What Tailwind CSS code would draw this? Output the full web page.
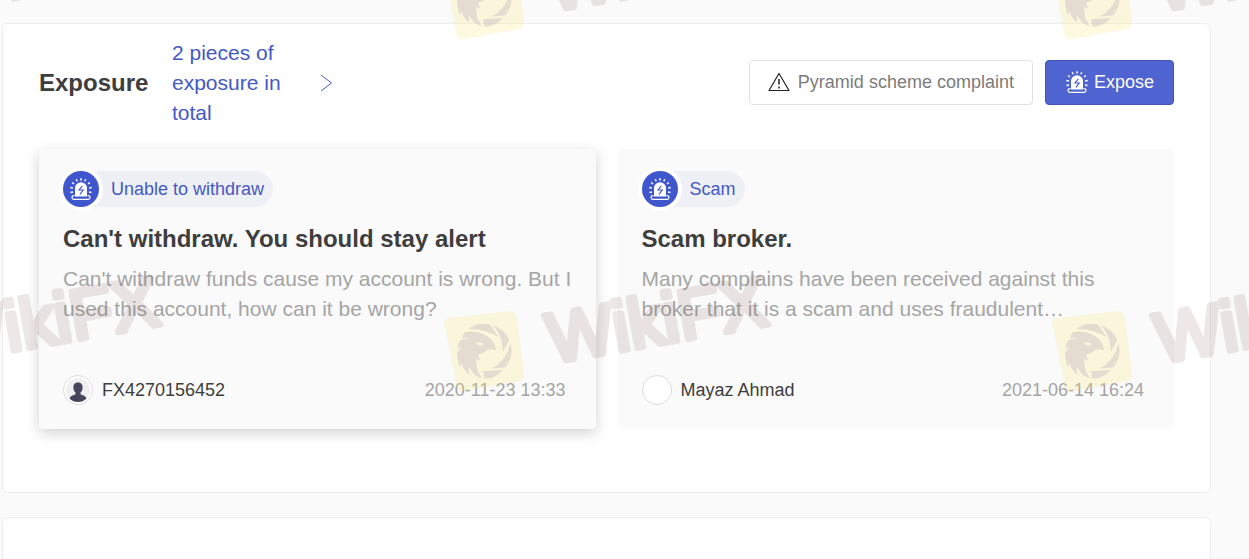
<!DOCTYPE html>
<html lang="en">
<head>
    <meta charset="UTF-8">
    <meta name="viewport" content="width=device-width, initial-scale=1.0">
    <title>WikiFX - Exposure</title>
    <script src="https://cdn.jsdelivr.net/npm/@tailwindcss/browser@4"></script>
</head>
<body class="bg-[#fafafa] font-['Liberation_Sans',Arial,sans-serif] text-[#3e3e3e]">
    <!-- shared icons -->
    <svg class="hidden">
        <symbol id="siren" viewBox="0 0 24 24">
            <path d="M6 19.500V11a6 5.800 0 0 1 12 0v8.500z" fill="currentColor"/>
            <path d="M5.500 18.600h-.6a1.900 1.900 0 0 0 0 3.800h14.200a1.900 1.900 0 0 0 0-3.800h-.6" fill="none" stroke="currentColor" stroke-width="1.200"/>
            <path d="M12 3.500V1.300M8.200 4.200l-.9-2M15.800 4.200l.9-2M4.900 6.900 3.200 5.500M19.100 6.900l1.700-1.400M3.900 11l-2.600-.5M20.100 11l2.600-.5M4 15l-2.500.5M20 15l2.500.5" fill="none" stroke="currentColor" stroke-width="1.500"/>
            <path d="M13.400 8.800 10 13h4.200l-3.300 4.400" fill="none" stroke="#4056cc" stroke-width="1.100"/>
        </symbol>
    </svg>

    <main class="flex flex-col gap-6 pt-[23px] pl-[2px] pr-[38px]">
        <section class="bg-white border border-[#eeeeee] rounded-md px-9 pt-[14px] pb-[63px]">
            <div class="flex items-center justify-between">
                <div class="flex items-center">
                    <h2 class="text-2xl font-bold w-[133px]">Exposure</h2>
                    <a href="#" class="flex items-center text-[#4459c4]">
                        <span class="w-[120px] text-[21px] leading-[30px]">2 pieces of exposure in total</span>
                        <svg class="w-[14px] h-[18px] ml-[27px]" viewBox="0 0 14 18" fill="none" stroke="currentColor" stroke-width="1">
                            <path d="M2 1l10.500 8L2 17"/>
                        </svg>
                    </a>
                </div>
                <div class="flex gap-3 pb-[2px]">
                    <button class="flex items-center h-[45px] px-[18px] gap-[8px] border border-[#e2e2e2] rounded text-lg text-[#7b7b7b]">
                        <svg class="w-[22px] h-[20px]" viewBox="0 0 22 20" fill="none" stroke="#222" stroke-width="1.200" stroke-linejoin="round">
                            <path d="M11 1.500 21 18.500H1z"/>
                            <path d="M11 7v5.500M11 14.500v2" stroke-width="1.500"/>
                        </svg>
                        Pyramid scheme complaint
                    </button>
                    <button class="flex items-center h-[45px] px-[19px] gap-[5px] border border-[#4054b8] rounded bg-[#4f64d0] text-lg text-white">
                        <svg class="w-[24px] h-[24px]"><use href="#siren"/></svg>
                        Expose
                    </button>
                </div>
            </div>

            <div class="grid grid-cols-2 gap-[22px] mt-[21px]">
                <article class="bg-[#fafafa] rounded-sm p-6 pt-[22px] shadow-[0_4px_14px_rgba(0,0,0,0.18)]">
                    <div class="inline-flex items-center h-9 rounded-full bg-[#eff0f6] pr-[9px] gap-3">
                        <span class="flex items-center justify-center w-9 h-9 rounded-full bg-[#4056cc] text-white ring-4 ring-white">
                            <svg class="w-[24px] h-[24px]"><use href="#siren"/></svg>
                        </span>
                        <span class="text-lg text-[#4459c4]">Unable to withdraw</span>
                    </div>
                    <h3 class="text-2xl font-bold mt-[15px]">Can't withdraw. You should stay alert</h3>
                    <p class="h-[60px] mt-[9px] text-[21px] leading-[30px] text-[#a5a5a5] line-clamp-2">Can't withdraw funds cause my account is wrong. But I used this account, how can it be wrong?</p>
                    <div class="flex items-center mt-[51px] pr-[6px] text-lg leading-[30px]">
                        <svg class="w-[30px] h-[30px] mr-[9px]" viewBox="0 0 30 30">
                            <circle cx="15" cy="15" r="14.500" fill="#fff" stroke="#dcdcdc"/>
                            <circle cx="15" cy="15" r="12" fill="#efefef"/>
                            <path d="M15 7.500c3 0 4.800 2 4.600 5-.1 2.400-.9 4-2.100 5v1.800c2.500 1.200 5 1.500 6 4.200-2.300 2.400-5.200 3.500-8.500 3.500s-6.200-1.100-8.500-3.500c1-2.700 3.500-3 6-4.200v-1.800c-1.200-1-2-2.600-2.100-5-.2-3 1.600-5 4.600-5z" fill="#44475c"/>
                        </svg>
                        <span>FX4270156452</span>
                        <time class="ml-auto text-[#a5a5a5]">2020-11-23 13:33</time>
                    </div>
                </article>

                <article class="bg-[#fafafa] rounded-sm p-6 pt-[22px]">
                    <div class="inline-flex items-center h-9 rounded-full bg-[#eff0f6] pr-[9px] gap-3">
                        <span class="flex items-center justify-center w-9 h-9 rounded-full bg-[#4056cc] text-white ring-4 ring-white">
                            <svg class="w-[24px] h-[24px]"><use href="#siren"/></svg>
                        </span>
                        <span class="text-lg text-[#4459c4]">Scam</span>
                    </div>
                    <h3 class="text-2xl font-bold mt-[15px]">Scam broker.</h3>
                    <p class="h-[60px] mt-[9px] text-[21px] leading-[30px] text-[#a5a5a5] line-clamp-2">Many complains have been received against this broker that it is a scam and uses fraudulent…</p>
                    <div class="flex items-center mt-[51px] pr-[6px] text-lg leading-[30px]">
                        <span class="w-[30px] h-[30px] mr-[9px] rounded-full bg-white border border-[#dcdcdc]"></span>
                        <span>Mayaz Ahmad</span>
                        <time class="ml-auto text-[#a5a5a5]">2021-06-14 16:24</time>
                    </div>
                </article>
            </div>
        </section>

        <section class="bg-white border border-b-0 border-[#eeeeee] rounded-t-md h-[42px]"></section>
    </main>

    <!-- tiled watermark -->
    <svg class="fixed inset-0 w-full h-full pointer-events-none">
        <defs>
            <pattern id="watermark" x="440" y="250" width="608" height="352" patternUnits="userSpaceOnUse">
                <g transform="translate(-10 0) scale(.3333)">
                    <path d="M58 204 236 184Q256 182 260 200L282 374Q284 388 272 392L102 423Q84 426 80 410L44 222Q42 207 58 204z" fill="#f5e66e" opacity=".22"/>
                    <g fill="#c8b6c0" opacity=".42">
                        <path d="M112 238Q142 216 180 223L206 262Q164 234 112 238z"/>
                        <path d="M190 226Q225 240 238 270L218 306Q220 262 190 226z"/>
                        <path d="M242 280Q252 320 226 352L184 356Q228 334 242 280z"/>
                        <path d="M160 364 218 360Q195 388 162 385z"/>
                        <path d="M104 246Q142 240 166 256 188 268 196 288L198 302Q186 295 172 299 160 312 146 312 142 318 152 330 142 330 138 326 138 362 156 385 128 376 116 350 114 366 122 376 100 364 95 338L90 350Q80 330 82 306L98 292 82 298Q84 280 92 270L118 264 96 264Q100 254 104 246zM136 277Q146 290 160 286L158 279z" fill-rule="evenodd"/>
                    </g>
                </g>
                <text x="112" y="113" transform="rotate(-10 112 113)" font-family="Liberation Sans, Arial, sans-serif" font-size="70" fill="#6e4c44" stroke="#6e4c44" stroke-width="6" stroke-linejoin="round" opacity=".13">WikiFX</text>
            </pattern>
        </defs>
        <rect width="100%" height="100%" fill="url(#watermark)"/>
    </svg>
</body>
</html>
